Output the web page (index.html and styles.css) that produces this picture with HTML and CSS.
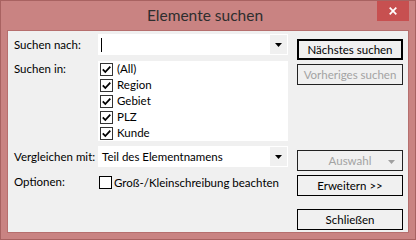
FILE: index.html
```html
<!DOCTYPE html>
<html lang="de">
<head>
<meta charset="utf-8">
<title>Elemente suchen</title>
<link rel="stylesheet" href="styles.css">
</head>
<body>
<div class="window">
  <div class="titlebar">
    <span></span>
    <div class="title">Elemente suchen</div>
    <div class="close-wrap">
      <div class="close">
        <svg width="8" height="8" viewBox="0 0 8 8"><path d="M0.7 0.7 L7.3 7.3 M7.3 0.7 L0.7 7.3" stroke="#fff" stroke-width="1.7" fill="none"/></svg>
      </div>
    </div>
  </div>
  <div class="client">
    <div class="form">
      <div class="row row-search">
        <div class="lbl">Suchen nach:</div>
        <div class="combo">
          <div class="combo-text"><span class="caret"></span></div>
          <div class="combo-btn"><svg width="7" height="4" viewBox="0 0 7 4"><path d="M0 0 H7 L3.5 4 Z" fill="#000"/></svg></div>
        </div>
      </div>
      <div class="row row-in">
        <div class="lbl lbl-top">Suchen in:</div>
        <div class="list">
          <div class="item"><svg class="cb" width="13" height="13" viewBox="0 0 13 13"><rect x="0.5" y="0.5" width="12" height="12" fill="#fff" stroke="#333"/><path d="M2.8 6.4 L5.3 9 L10.3 3.6" stroke="#000" stroke-width="1.8" fill="none"/></svg><span>(All)</span></div>
          <div class="item"><svg class="cb" width="13" height="13" viewBox="0 0 13 13"><rect x="0.5" y="0.5" width="12" height="12" fill="#fff" stroke="#333"/><path d="M2.8 6.4 L5.3 9 L10.3 3.6" stroke="#000" stroke-width="1.8" fill="none"/></svg><span>Region</span></div>
          <div class="item"><svg class="cb" width="13" height="13" viewBox="0 0 13 13"><rect x="0.5" y="0.5" width="12" height="12" fill="#fff" stroke="#333"/><path d="M2.8 6.4 L5.3 9 L10.3 3.6" stroke="#000" stroke-width="1.8" fill="none"/></svg><span>Gebiet</span></div>
          <div class="item"><svg class="cb" width="13" height="13" viewBox="0 0 13 13"><rect x="0.5" y="0.5" width="12" height="12" fill="#fff" stroke="#333"/><path d="M2.8 6.4 L5.3 9 L10.3 3.6" stroke="#000" stroke-width="1.8" fill="none"/></svg><span>PLZ</span></div>
          <div class="item"><svg class="cb" width="13" height="13" viewBox="0 0 13 13"><rect x="0.5" y="0.5" width="12" height="12" fill="#fff" stroke="#333"/><path d="M2.8 6.4 L5.3 9 L10.3 3.6" stroke="#000" stroke-width="1.8" fill="none"/></svg><span>Kunde</span></div>
        </div>
      </div>
      <div class="row row-cmp">
        <div class="lbl">Vergleichen mit:</div>
        <div class="combo">
          <div class="combo-text">Teil des Elementnamens</div>
          <div class="combo-btn"><svg width="7" height="4" viewBox="0 0 7 4"><path d="M0 0 H7 L3.5 4 Z" fill="#000"/></svg></div>
        </div>
      </div>
      <div class="row row-opt">
        <div class="lbl">Optionen:</div>
        <div class="opt">
          <svg class="cb" width="13" height="13" viewBox="0 0 13 13"><rect x="0.5" y="0.5" width="12" height="12" fill="#fff" stroke="#000"/></svg>
          <span>Groß-/Kleinschreibung beachten</span>
        </div>
      </div>
    </div>
    <div class="buttons">
      <div class="btn btn-default">Nächstes suchen</div>
      <div class="btn btn-disabled btn-prev">Vorheriges suchen</div>
      <div class="btn btn-disabled btn-sel">Auswahl<svg class="sel-arrow" width="7" height="4" viewBox="0 0 7 4"><path d="M0 0 H7 L3.5 4 Z" fill="#a0a0a0"/></svg></div>
      <div class="btn btn-ext">Erweitern &gt;&gt;</div>
      <div class="btn btn-close">Schließen</div>
    </div>
  </div>
</div>
</body>
</html>
```

FILE: styles.css
```css
html, body {
  margin: 0;
  padding: 0;
  background: #c98382;
}

.window {
  width: 416px;
  height: 240px;
  box-sizing: border-box;
  border: 1px solid #a86261;
  background: #c98382;
  display: flex;
  flex-direction: column;
  padding: 0 7px 7px 7px;
  font-family: Lato, "Liberation Sans", sans-serif;
  font-size: 11.5px;
  color: #000;
}

.titlebar {
  height: 30px;
  margin: 0 -7px;
  padding-right: 6px;
  display: grid;
  grid-template-columns: 1fr auto 1fr;
  align-items: start;
}

.title {
  font-size: 15.5px;
  line-height: 28px;
  color: #2e2e2e;
  white-space: nowrap;
}

.close-wrap {
  display: flex;
  justify-content: flex-end;
}

.close {
  width: 32px;
  height: 20px;
  background: #c75050;
  display: flex;
  align-items: center;
  justify-content: center;
}

.client {
  flex: 1;
  background: #f0f0f0;
  box-shadow: 0 0 0 1px #b66f6e;
  display: flex;
  padding: 3px 5px 0 6px;
  gap: 9px;
}

.form {
  width: 274px;
  display: flex;
  flex-direction: column;
}

.row {
  display: flex;
  align-items: center;
}

.lbl {
  width: 84px;
  flex: none;
  line-height: 16px;
  white-space: nowrap;
}

.row-in {
  margin-top: 6px;
  align-items: flex-start;
}

.row-cmp {
  margin-top: 5px;
}

.row-opt {
  margin-top: 7px;
  height: 16px;
}

.combo {
  width: 190px;
  height: 21px;
  box-sizing: border-box;
  border: 1px solid #fff;
  background: #fff;
  display: flex;
}

.combo-text {
  flex: 1;
  padding-left: 3px;
  line-height: 19px;
  white-space: nowrap;
  overflow: hidden;
  display: flex;
  align-items: center;
}

.caret {
  display: block;
  width: 1px;
  height: 14px;
  background: #000;
  margin-left: -1px;
}

.combo-btn {
  width: 17px;
  height: 19px;
  background: #f0f0f0;
  display: flex;
  align-items: center;
  justify-content: center;
}

.list {
  width: 190px;
  height: 80px;
  background: #fff;
  padding-left: 2px;
  box-sizing: border-box;
}

.item {
  height: 16px;
  display: flex;
  align-items: center;
  gap: 4px;
  line-height: 16px;
}

.cb {
  display: block;
  flex: none;
}

.opt {
  display: flex;
  align-items: center;
  gap: 2px;
  padding-left: 1px;
  white-space: nowrap;
}

.buttons {
  width: 106px;
  display: flex;
  flex-direction: column;
  padding-top: 5px;
}

.btn {
  height: 21px;
  box-sizing: border-box;
  border: 1px solid #000;
  background: #f0f0f0;
  display: flex;
  align-items: center;
  justify-content: center;
  position: relative;
  white-space: nowrap;
}

.btn-default {
  border-width: 2px;
}

.btn-disabled {
  color: #a3a3a3;
  border-color: #222;
}

.btn-prev {
  margin-top: 4px;
}

.btn-sel {
  margin-top: 65px;
}

.sel-arrow {
  position: absolute;
  right: 7px;
  top: 9px;
}

.btn-ext {
  margin-top: 4px;
}

.btn-close {
  margin-top: 13px;
}
```
